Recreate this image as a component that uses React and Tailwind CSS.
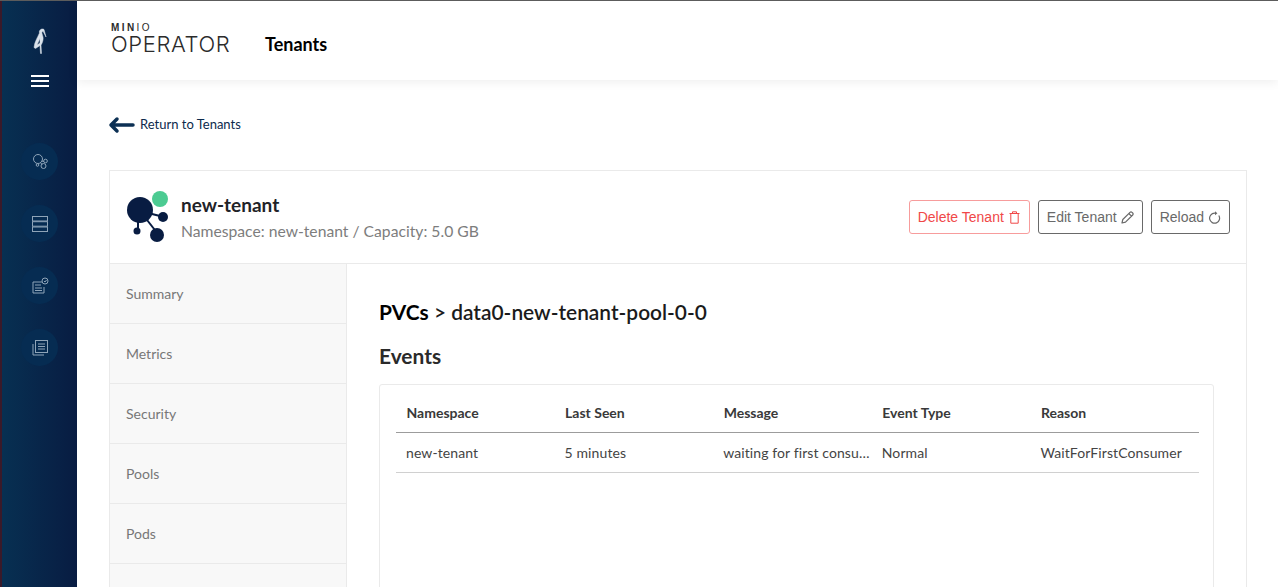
import React from 'react';

const tabs = ['Summary', 'Metrics', 'Security', 'Pools', 'Pods', ''];
const columns = ['Namespace', 'Last Seen', 'Message', 'Event Type', 'Reason'];
const row = ['new-tenant', '5 minutes', 'waiting for first consumer to be created', 'Normal', 'WaitForFirstConsumer'];

function NavIcon({ children }) {
  return (
    <div className="w-[37px] h-[37px] rounded-full bg-[#062c52] flex items-center justify-center text-[#8ea4b8]">
      <svg width="18" height="18" viewBox="0 0 18 18" fill="none" stroke="currentColor" strokeWidth="1">
        {children}
      </svg>
    </div>
  );
}

function Sidebar() {
  return (
    <aside className="w-[77px] shrink-0 h-full flex flex-col items-center bg-gradient-to-r from-[#073052] to-[#081c42] border-l-2 border-[#3a1a2a]">
      <svg className="mt-[27px]" width="14" height="26" viewBox="0 0 14 26" fill="#dbe2ea" stroke="#dbe2ea" strokeWidth="0.500" fillRule="evenodd">
        <path d="M6.500 5C5.500 2 9 0 11 1.500L13 9l-2.500-5c-1-1-2-.0-1.500 1.500.5 2.500 1.500 3.500 1 6.500-.5 3-2 5-2 5l.5 8.500h-1L7 17.500l-4.500 3-1.500-1C1.500 14 4.500 9.500 6.500 5zM7 10.500l-3 6.500 3-2z" />
      </svg>
      <div className="mt-[21px] w-[18px] flex flex-col gap-[3px]">
        <div className="h-[2px] bg-white" />
        <div className="h-[2px] bg-white" />
        <div className="h-[2px] bg-white" />
      </div>
      <div className="mt-[56px] flex flex-col gap-[25px]">
        <NavIcon>
          <circle cx="7" cy="6" r="4.500" />
          <circle cx="14.500" cy="8" r="1.800" />
          <circle cx="12.500" cy="13" r="2.500" />
          <circle cx="6.500" cy="12" r="1.300" />
          <path d="M10.500 8l2.500.5M9.500 9.500l1.500 2" />
        </NavIcon>
        <NavIcon>
          <rect x="1.500" y="1.500" width="15" height="4.500" />
          <rect x="1.500" y="6.700" width="15" height="4.500" />
          <rect x="1.500" y="12" width="15" height="4.500" />
        </NavIcon>
        <NavIcon>
          <path d="M11 5H2v11h11v-6" />
          <path d="M4 8h6M4 11h7M4 13.500h7" />
          <circle cx="14" cy="4" r="3" />
          <path d="M13 4l1 1 1.500-2" />
        </NavIcon>
        <NavIcon>
          <rect x="4.500" y="1.500" width="12" height="12" />
          <path d="M7 5h7M7 7.500h7M7 10h7" />
          <path d="M2 5v11h11" />
        </NavIcon>
      </div>
    </aside>
  );
}

function ActionButton({ className, children }) {
  return (
    <button className={`h-[34px] px-2 rounded-[3px] border flex items-center gap-[4px] bg-white text-[14px] font-['Liberation_Sans',sans-serif] ${className}`}>
      {children}
    </button>
  );
}

function TrashIcon() {
  return (
    <svg width="13" height="13" viewBox="0 0 13 13" fill="none" stroke="currentColor" strokeWidth="1">
      <path d="M1.500 2.500h10M4.500 2.500V.8h4v1.700M2.800 2.500v9.700h7.400V2.500" />
    </svg>
  );
}

function PencilIcon() {
  return (
    <svg width="13" height="13" viewBox="0 0 13 13" fill="none" stroke="currentColor" strokeWidth="1.200" strokeLinejoin="round">
      <path d="M1 12l.8-3.500L9 1.300c.6-.6 1.400-.6 2 0l.7.7c.6.6.6 1.400 0 2L4.500 11.200zM7.800 2.500l2.700 2.700" />
    </svg>
  );
}

function ReloadIcon() {
  return (
    <svg width="13" height="13" viewBox="0 0 13 13" fill="none" stroke="currentColor" strokeWidth="1.200">
      <path d="M10.800 4.500a5 5 0 1 1-4.300-2.300H8" />
      <path d="M7 .3l2.400 1.900L7 4.200z" fill="currentColor" stroke="none" />
    </svg>
  );
}

function TenantIcon() {
  return (
    <svg width="44" height="52" viewBox="0 0 44 52" className="shrink-0">
      <g stroke="#081c42" strokeWidth="2">
        <line x1="14" y1="20" x2="38" y2="26" />
        <line x1="14" y1="20" x2="32" y2="43" />
        <line x1="12" y1="20" x2="12" y2="38" />
      </g>
      <circle cx="14" cy="19" r="13" fill="#081c42" />
      <circle cx="37" cy="26" r="5" fill="#081c42" />
      <circle cx="31" cy="44" r="7" fill="#081c42" />
      <circle cx="11" cy="40" r="3.500" fill="#081c42" />
      <circle cx="34" cy="8" r="8" fill="#4ccb92" />
    </svg>
  );
}

export default function App() {
  return (
    <div className="w-[1278px] h-[587px] overflow-hidden flex bg-white font-['Lato',sans-serif] border-t border-[#5c5c5c]">
      <Sidebar />
      <main className="flex-1 min-w-0 flex flex-col">
        <header className="h-[79px] shrink-0 flex items-center pl-[34px] shadow-[0_2px_10px_rgba(0,0,0,0.07)]">
          <div className="w-[121px] mt-[-2px] text-[#2b2b2b]">
            <div className="text-[10px] leading-[8px] tracking-[2.400px] font-['Liberation_Sans',sans-serif]">
              <span className="font-black">MIN</span><span className="font-light">IO</span>
            </div>
            <div className="text-[22px] leading-[24px] font-light font-['Inter',sans-serif] tracking-[0.600px] whitespace-nowrap">OPERATOR</div>
          </div>
          <h1 className="ml-[33px] text-[18px] font-bold text-black mt-[7px]">Tenants</h1>
        </header>

        <div className="flex-1 min-h-0 pl-[32px] pr-[31px] pt-[30px]">
          <div className="flex items-center h-[30px] ml-[-1px]">
            <svg width="27" height="18" viewBox="0 0 27 18" fill="none" stroke="#0c3054" strokeWidth="3.500" strokeLinecap="round" strokeLinejoin="round">
              <path d="M25 9H3M9 3L3 9l6 6" />
            </svg>
            <span className="ml-[5px] text-[13px] text-[#0c2a4c]">Return to Tenants</span>
          </div>

          <section className="mt-[30px] border border-[#eaeaea] border-b-0">
            <div className="h-[93px] flex items-center justify-between pl-[16px] pr-[16px] border-b border-[#eaeaea]">
              <div className="flex items-center gap-[11px]">
                <TenantIcon />
                <div>
                  <div className="text-[19px] leading-[24px] font-bold text-[#1f2328]">new-tenant</div>
                  <div className="mt-[3px] text-[15.700px] leading-[22px] text-[#7d7d7d]">Namespace: new-tenant / Capacity: 5.0 GB</div>
                </div>
              </div>
              <div className="flex items-center gap-[8px]">
                <ActionButton className="border-[#f79c9c] text-[#f04848]">
                  Delete Tenant
                  <TrashIcon />
                </ActionButton>
                <ActionButton className="border-[#696969] text-[#696969]">
                  Edit Tenant
                  <PencilIcon />
                </ActionButton>
                <ActionButton className="border-[#696969] text-[#696969]">
                  Reload
                  <ReloadIcon />
                </ActionButton>
              </div>
            </div>

            <div className="flex">
              <nav className="w-[237px] shrink-0 bg-[#f8f8f8] border-r border-[#eaeaea]">
                {tabs.map((t, i) => (
                  <div key={i} className="h-[60px] flex items-center pl-[16px] text-[14px] text-[#777777] border-b border-[#eaeaea]">
                    {t}
                  </div>
                ))}
              </nav>
              <div className="flex-1 min-w-0 pl-[32px] pr-[32px] pt-[33px]">
                <h2 className="text-[20.900px] leading-[30px] text-[#1b1b1b] font-semibold">
                  <span className="font-bold text-black">PVCs</span> &gt; data0-new-tenant-pool-0-0
                </h2>
                <h3 className="mt-[14px] text-[20.900px] leading-[30px] font-bold text-[#2a2a2a]">Events</h3>
                <div className="mt-[13px] h-[400px] border border-[#eaeaea] rounded-[3px] pl-[16px] pr-[14px] pt-[8px]">
                  <div className="grid grid-cols-[repeat(5,158.600px)] h-[40px] items-center border-b border-[#9c9c9c]">
                    {columns.map(c => (
                      <div key={c} className="pl-[10.500px] text-[14px] font-bold text-[#393939]">{c}</div>
                    ))}
                  </div>
                  <div className="grid grid-cols-[repeat(5,158.600px)] h-[40px] items-center border-b border-[#d0d0d0]">
                    {row.map(c => (
                      <div key={c} className="pl-[10px] pr-0 text-[14px] tracking-[0.1px] text-[#444444] truncate whitespace-nowrap">{c}</div>
                    ))}
                  </div>
                </div>
              </div>
            </div>
          </section>
        </div>
      </main>
    </div>
  );
}
